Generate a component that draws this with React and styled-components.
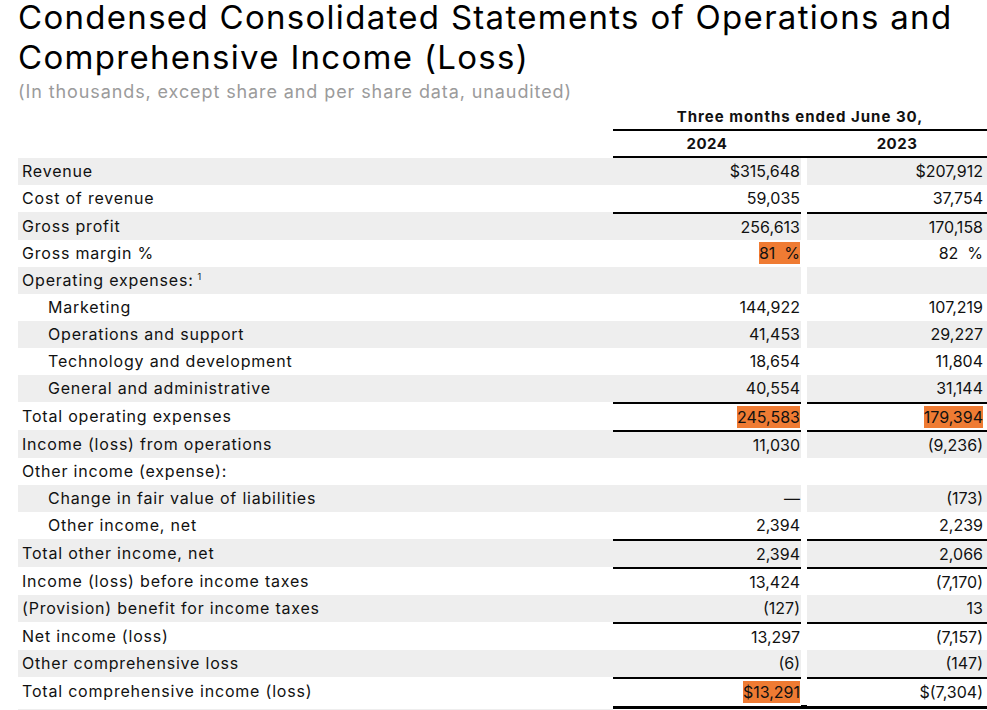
import React from 'react'
import styled, { createGlobalStyle } from 'styled-components'

const GlobalStyle = createGlobalStyle`
  body {
    margin: 0;
    background: #fff;
    font-family: Inter, "Liberation Sans", sans-serif;
    color: #111;
    overflow: hidden;
  }
`

const Page = styled.div`
  padding: 0 0 0 18px;
  width: 969px;
`

const Title = styled.h1`
  margin: -3px 0 0;
  font-size: 33px;
  line-height: 40px;
  font-weight: 400;
  letter-spacing: 1.3px;
  color: #000;
`

const Subtitle = styled.div`
  margin-top: 3px;
  font-size: 18px;
  line-height: 24px;
  letter-spacing: 0.9px;
  color: #9b9b9b;
`

const HeadRow = styled.div`
  display: grid;
  grid-template-columns: 595px 374px;
  margin-top: 1px;
`

const HeadCell = styled.div`
  grid-column: 2;
  text-align: center;
  font-weight: 700;
  font-size: 15px;
  line-height: 24px;
  letter-spacing: 1px;
  border-bottom: 2px solid #000;
`

const YearRow = styled.div`
  display: grid;
  grid-template-columns: 188px 186px;
  margin-left: 595px;
  border-bottom: 2px solid #000;
`

const Year = styled.div`
  text-align: center;
  font-weight: 700;
  font-size: 15px;
  line-height: 25px;
  letter-spacing: 0.5px;
  padding-left: ${p => (p.second ? '6px' : '0')};
`

const Row = styled.div`
  display: grid;
  grid-template-columns: 595px 188px 186px;
  height: ${p => (p.rule ? '28px' : '27px')};
`

const Label = styled.div`
  background: ${p => (p.shade ? '#eeeeee' : '#fff')};
  padding-left: ${p => (p.indent ? '30px' : '4px')};
  font-size: 16px;
  line-height: ${p => (p.rule ? '29px' : '27px')};
  letter-spacing: 0.8px;
  white-space: nowrap;
`

const Value = styled.div`
  box-sizing: border-box;
  background: ${p => (p.shade ? '#eeeeee' : '#fff')};
  margin-left: ${p => (p.second ? '6px' : '0')};
  padding-right: ${p => (p.second ? '4px' : '1px')};
  text-align: right;
  font-size: 16px;
  line-height: 27px;
  border-top: ${p => (p.rule ? '2px solid #000' : 'none')};
  white-space: pre;
`

const Mark = styled.span`
  background: #ef7b33;
  padding: 1px 0;
`

const Sup = styled.span`
  position: relative;
  top: -6px;
  font-size: 9px;
  line-height: 0;
  margin-left: 4px;
`

const BottomRule = styled.div`
  margin-left: 595px;
  height: 4px;
  background: #000;
`

const NextRow = styled.div`
  height: 10px;
  width: 595px;
  background: #eeeeee;
`

const rows = [
  { label: 'Revenue', a: '$315,648', b: '$207,912' },
  { label: 'Cost of revenue', a: '59,035', b: '37,754' },
  { label: 'Gross profit', a: '256,613', b: '170,158', rule: true },
  { label: 'Gross margin %', a: '81  %', b: '82  %', markA: true },
  { label: 'Operating expenses:', a: '', b: '', sup: true },
  { label: 'Marketing', a: '144,922', b: '107,219', indent: true },
  { label: 'Operations and support', a: '41,453', b: '29,227', indent: true },
  { label: 'Technology and development', a: '18,654', b: '11,804', indent: true },
  { label: 'General and administrative', a: '40,554', b: '31,144', indent: true },
  { label: 'Total operating expenses', a: '245,583', b: '179,394', rule: true, markA: true, markB: true },
  { label: 'Income (loss) from operations', a: '11,030', b: '(9,236)', rule: true },
  { label: 'Other income (expense):', a: '', b: '' },
  { label: 'Change in fair value of liabilities', a: '—', b: '(173)', indent: true },
  { label: 'Other income, net', a: '2,394', b: '2,239', indent: true },
  { label: 'Total other income, net', a: '2,394', b: '2,066', rule: true },
  { label: 'Income (loss) before income taxes', a: '13,424', b: '(7,170)', rule: true },
  { label: '(Provision) benefit for income taxes', a: '(127)', b: '13' },
  { label: 'Net income (loss)', a: '13,297', b: '(7,157)', rule: true },
  { label: 'Other comprehensive loss', a: '(6)', b: '(147)' },
  { label: 'Total comprehensive income (loss)', a: '$13,291', b: '$(7,304)', rule: true, markA: true },
]

export default function App() {
  return (
    <Page>
      <GlobalStyle />
      <Title>
        Condensed Consolidated Statements of Operations and
        <br />
        Comprehensive Income (Loss)
      </Title>
      <Subtitle>(In thousands, except share and per share data, unaudited)</Subtitle>
      <HeadRow>
        <HeadCell>Three months ended June 30,</HeadCell>
      </HeadRow>
      <YearRow>
        <Year>2024</Year>
        <Year second>2023</Year>
      </YearRow>
      {rows.map((r, i) => {
        const shade = i % 2 === 0
        return (
          <Row key={r.label} rule={r.rule}>
            <Label shade={shade} indent={r.indent} rule={r.rule}>
              {r.label}
              {r.sup && <Sup>1</Sup>}
            </Label>
            <Value shade={shade} rule={r.rule}>
              {r.markA ? <Mark>{r.a}</Mark> : r.a}
            </Value>
            <Value shade={shade} rule={r.rule} second>
              {r.markB ? <Mark>{r.b}</Mark> : r.b}
            </Value>
          </Row>
        )
      })}
      <BottomRule />
      <NextRow />
    </Page>
  )
}
